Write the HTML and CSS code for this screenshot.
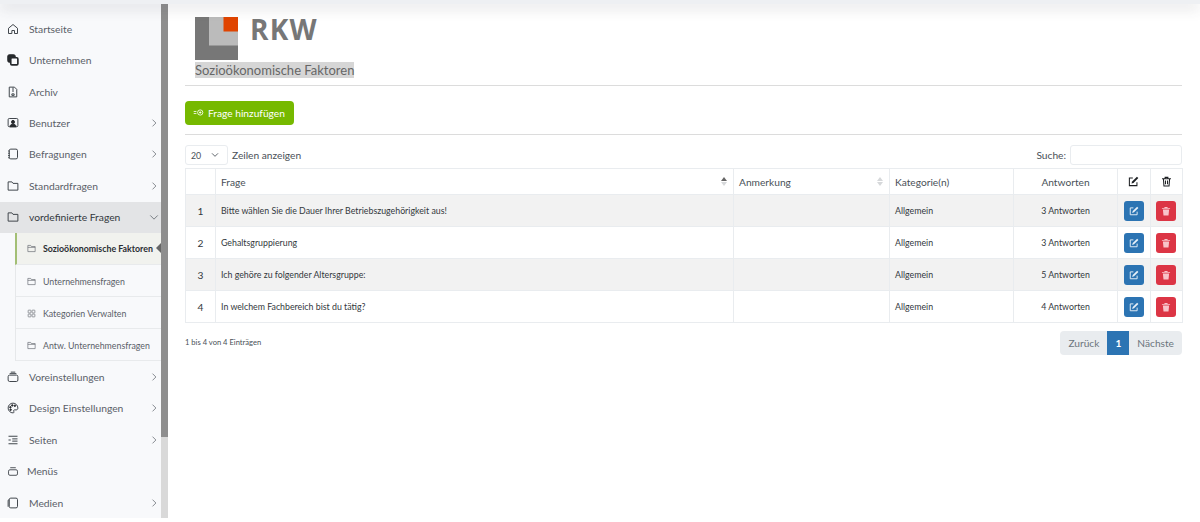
FILE: index.html
```html
<!DOCTYPE html>
<html lang="de">
<head>
<meta charset="utf-8">
<title>Sozioökonomische Faktoren</title>
<link rel="stylesheet" href="styles.css">
</head>
<body>
<div class="topbar"></div>
<div class="layout">
  <aside class="sidebar">
    <nav class="menu">
      <a class="item"><svg class="ico" viewBox="0 0 16 16"><path d="M2 14V7l6-5 6 5v7h-4v-4H6.500v4z"/></svg><span>Startseite</span></a>
      <a class="item"><svg class="ico" viewBox="0 0 16 16"><rect class="solid" x="1" y="1" width="10" height="10" rx="2"/><rect class="thick" x="5" y="5" width="9.500" height="9.500" rx="1.500"/></svg><span>Unternehmen</span></a>
      <a class="item"><svg class="ico" viewBox="0 0 16 16"><path d="M3 1.500h7l3 3v10H3z"/><path d="M8 2v6M6.500 10.500h3v2h-3z"/></svg><span>Archiv</span></a>
      <a class="item"><svg class="ico" viewBox="0 0 16 16"><rect x="1.500" y="2" width="13" height="11" rx="1.500"/><circle class="solid" cx="8" cy="6.500" r="2"/><path class="solid" d="M4 13c0-5 8-5 8 0z"/></svg><span>Benutzer</span><svg class="chev" viewBox="0 0 8 12"><path d="M2 1.500 6.500 6 2 10.500"/></svg></a>
      <a class="item"><svg class="ico" viewBox="0 0 16 16"><rect x="3" y="1.500" width="11" height="13" rx="2"/><path d="M1.500 4h2M1.500 7h2M1.500 10h2M1.500 13h2"/></svg><span>Befragungen</span><svg class="chev" viewBox="0 0 8 12"><path d="M2 1.500 6.500 6 2 10.500"/></svg></a>
      <a class="item"><svg class="ico" viewBox="0 0 16 16"><path d="M1.500 13.500v-11h5l1.500 2h6.500v9z"/></svg><span>Standardfragen</span><svg class="chev" viewBox="0 0 8 12"><path d="M2 1.500 6.500 6 2 10.500"/></svg></a>
      <a class="item open"><svg class="ico" viewBox="0 0 16 16"><path d="M1.500 13.500v-11h5l1.500 2h6.500v9z"/></svg><span>vordefinierte Fragen</span><svg class="chev wide" viewBox="0 0 12 8"><path d="M1.500 1.500 6 6l4.500-4.500"/></svg></a>
      <div class="submenu">
        <a class="subitem active"><svg class="subico" viewBox="0 0 16 16"><path d="M1.500 13.500v-11h5l1.500 2h6.500v9zM1.500 6h13"/></svg><span>Sozioökonomische Faktoren</span></a>
        <a class="subitem"><svg class="subico" viewBox="0 0 16 16"><path d="M1.500 13.500v-11h5l1.500 2h6.500v9zM1.500 6h13"/></svg><span>Unternehmensfragen</span></a>
        <a class="subitem"><svg class="subico" viewBox="0 0 16 16"><rect x="2" y="2" width="5" height="5" rx="1"/><rect x="9" y="2" width="5" height="5" rx="1"/><rect x="2" y="9" width="5" height="5" rx="1"/><rect x="9" y="9" width="5" height="5" rx="1"/></svg><span>Kategorien Verwalten</span></a>
        <a class="subitem"><svg class="subico" viewBox="0 0 16 16"><path d="M1.500 13.500v-11h5l1.500 2h6.500v9zM1.500 6h13"/></svg><span>Antw. Unternehmensfragen</span></a>
      </div>
      <a class="item"><svg class="ico" viewBox="0 0 16 16"><rect x="1.500" y="5.500" width="13" height="8.500" rx="2"/><path d="M3.500 3.500h9M5 1.500h6"/></svg><span>Voreinstellungen</span><svg class="chev" viewBox="0 0 8 12"><path d="M2 1.500 6.500 6 2 10.500"/></svg></a>
      <a class="item"><svg class="ico" viewBox="0 0 16 16"><path d="M8 1.500a6.500 6.500 0 1 0 0 13c1.500 0 1.500-1.200 1-2-.6-1 0-2 1.200-2h2c1.500 0 2.300-1 2.300-2.500 0-3.500-3-6.500-6.500-6.500z"/><circle class="solid" cx="4.500" cy="7" r="1"/><circle class="solid" cx="7" cy="4.500" r="1"/><circle class="solid" cx="10.500" cy="5" r="1"/><circle class="solid" cx="4.800" cy="10.300" r="1"/></svg><span>Design Einstellungen</span><svg class="chev" viewBox="0 0 8 12"><path d="M2 1.500 6.500 6 2 10.500"/></svg></a>
      <a class="item"><svg class="ico" viewBox="0 0 16 16"><path d="M2 3h12M7 6.500h7M7 9.500h7M2 13h12M2 8h3"/></svg><span>Seiten</span><svg class="chev" viewBox="0 0 8 12"><path d="M2 1.500 6.500 6 2 10.500"/></svg></a>
      <a class="item tight"><svg class="ico small" viewBox="0 0 16 16"><rect x="1.500" y="5.500" width="13" height="8" rx="2"/><path d="M4 2.500h8"/></svg><span>Menüs</span></a>
      <a class="item"><svg class="ico" viewBox="0 0 16 16"><rect x="3" y="1.500" width="11" height="13" rx="2"/><path d="M3 3.500c-1 0-1.500.5-1.500 1.500v8"/></svg><span>Medien</span><svg class="chev" viewBox="0 0 8 12"><path d="M2 1.500 6.500 6 2 10.500"/></svg></a>
    </nav>
    <div class="scrollbar"><div class="thumb"></div></div>
  </aside>

  <main class="content">
    <header class="brand">
      <div class="logo">
        <svg class="logo-mark" viewBox="0 0 43 43"><rect width="43" height="43" fill="#777"/><rect x="14" width="29" height="28.500" fill="#bbb"/><rect x="28.500" width="14.500" height="14.500" fill="#e04400"/></svg>
        <span class="logo-text">RKW</span>
      </div>
      <h1 class="title"><span class="selected">Sozioökonomische Faktoren</span></h1>
    </header>
    <hr class="rule">
    <button class="add"><svg class="add-ico" viewBox="0 0 16 10"><path d="M1 3.500h4M1 6.500h4"/><circle cx="10.500" cy="5" r="3.800"/><path d="M8.800 5h3.400M10.500 3.300v3.400"/></svg>Frage hinzufügen</button>
    <hr class="rule second">
    <div class="controls">
      <div class="length"><div class="select"><span>20</span><svg class="select-chev" viewBox="0 0 12 8"><path d="M1.500 1.500 6 6l4.500-4.500"/></svg></div><span>Zeilen anzeigen</span></div>
      <div class="search"><span>Suche:</span><div class="input"></div></div>
    </div>
    <table class="grid">
      <thead>
        <tr>
          <th class="c-num"></th>
          <th class="c-q sortable">Frage<span class="sort"><i class="up dark"></i><i class="down"></i></span></th>
          <th class="c-note sortable">Anmerkung<span class="sort"><i class="up"></i><i class="down"></i></span></th>
          <th class="c-cat">Kategorie(n)</th>
          <th class="c-ans">Antworten</th>
          <th class="c-act"><svg class="head-ico" viewBox="0 0 16 16"><path class="line" d="M13 9v5H2V3h5"/><path class="fill" d="M13 1l2 2-7 7-3 1 1-3z"/></svg></th>
          <th class="c-act"><svg class="head-ico" viewBox="0 0 16 16"><path class="line" d="M1.500 4h13M6 4V2h4v2M3.500 4l.8 10.500h7.400L12.500 4M6.500 6.500v5.500M9.500 6.500v5.500"/></svg></th>
        </tr>
      </thead>
      <tbody>
        <tr class="odd"><td class="num">1</td><td>Bitte wählen Sie die Dauer Ihrer Betriebszugehörigkeit aus!</td><td></td><td>Allgemein</td><td class="center">3 Antworten</td><td class="center"><a class="act edit"><svg viewBox="0 0 16 16"><path class="line" d="M13 9v5H2V3h5"/><path class="fill" d="M13 1l2 2-7 7-3 1 1-3z"/></svg></a></td><td class="center"><a class="act del"><svg viewBox="0 0 16 16"><path class="fill" d="M1.500 3h4V1.500h5V3h4v1.500h-13zM3 5.500h10L12 15H4z"/></svg></a></td></tr>
        <tr><td class="num">2</td><td>Gehaltsgruppierung</td><td></td><td>Allgemein</td><td class="center">3 Antworten</td><td class="center"><a class="act edit"><svg viewBox="0 0 16 16"><path class="line" d="M13 9v5H2V3h5"/><path class="fill" d="M13 1l2 2-7 7-3 1 1-3z"/></svg></a></td><td class="center"><a class="act del"><svg viewBox="0 0 16 16"><path class="fill" d="M1.500 3h4V1.500h5V3h4v1.500h-13zM3 5.500h10L12 15H4z"/></svg></a></td></tr>
        <tr class="odd"><td class="num">3</td><td>Ich gehöre zu folgender Altersgruppe:</td><td></td><td>Allgemein</td><td class="center">5 Antworten</td><td class="center"><a class="act edit"><svg viewBox="0 0 16 16"><path class="line" d="M13 9v5H2V3h5"/><path class="fill" d="M13 1l2 2-7 7-3 1 1-3z"/></svg></a></td><td class="center"><a class="act del"><svg viewBox="0 0 16 16"><path class="fill" d="M1.500 3h4V1.500h5V3h4v1.500h-13zM3 5.500h10L12 15H4z"/></svg></a></td></tr>
        <tr><td class="num">4</td><td>In welchem Fachbereich bist du tätig?</td><td></td><td>Allgemein</td><td class="center">4 Antworten</td><td class="center"><a class="act edit"><svg viewBox="0 0 16 16"><path class="line" d="M13 9v5H2V3h5"/><path class="fill" d="M13 1l2 2-7 7-3 1 1-3z"/></svg></a></td><td class="center"><a class="act del"><svg viewBox="0 0 16 16"><path class="fill" d="M1.500 3h4V1.500h5V3h4v1.500h-13zM3 5.500h10L12 15H4z"/></svg></a></td></tr>
      </tbody>
    </table>
    <div class="footer">
      <div class="info">1 bis 4 von 4 Einträgen</div>
      <div class="pager"><span class="pg">Zurück</span><span class="pg current">1</span><span class="pg">Nächste</span></div>
    </div>
  </main>
</div>
</body>
</html>
```
FILE: styles.css
```css
* { box-sizing: border-box; }
html, body { margin: 0; height: 522px; overflow: hidden; background: #fff; }
body { font-family: "Lato", "Open Sans", sans-serif; color: #495057; }

.topbar { height: 4px; box-shadow: 0 3px 14px rgba(60, 60, 70, .28); background: #eef0f3; position: relative; }

.layout { display: flex; height: 514px; }

.sidebar { width: 168px; flex: none; display: flex; background: #f8f9fb; }
.menu { width: 161px; padding-top: 9px; flex: none; }
.scrollbar { width: 7px; background: #d9d9d9; }
.thumb { height: 433px; background: #8e8e8e; }

.item { display: flex; align-items: center; height: 31.450px; padding: 0 5px 0 7px; font-size: 10.300px; color: #5a6068; }
.item span { margin-left: 10px; flex: 1; white-space: nowrap; }
.item.open { background: #e3e4e6; color: #33383d; }
.item.tight span { margin-left: 8px; }
.ico { width: 12px; height: 12px; flex: none; fill: none; stroke: #3d4248; stroke-width: 1.300; }
.ico.small { height: 11px; }
.ico .solid { fill: #26292c; stroke: #26292c; }
.ico .thick { fill: #f8f9fb; stroke: #26292c; stroke-width: 2.200; }
.chev { width: 6px; height: 10px; flex: none; fill: none; stroke: #70757b; stroke-width: 1.100; margin-right: -1px; }
.chev.wide { width: 10px; height: 7px; margin-right: -3px; }

.submenu { margin-left: 15px; border-left: 1px solid #e6e8ea; }
.subitem { display: flex; align-items: center; height: 32px; padding: 1px 0 0 11px; font-size: 8.800px; color: #5a6068; border-bottom: 1px solid #e8eaec; position: relative; }
.subitem span { margin-left: 7px; white-space: nowrap; }
.subico { width: 9px; height: 9px; flex: none; fill: none; stroke: #5d6268; stroke-width: 1.100; }
.subitem.active { background: #f1f2ee; color: #2a2e33; font-weight: 700; border-left: 2px solid #a3bf75; margin-left: -1px; padding: 0 0 0 10px; }
.subitem.active::after { content: ""; position: absolute; right: 0; top: 10px; border: 5.500px solid transparent; border-right-color: #666; border-left: 0; }

.content { flex: 1; padding: 13px 18px 0 17px; min-width: 0; }

.brand { padding-left: 10px; }
.logo { display: flex; align-items: flex-start; height: 43px; }
.logo-mark { width: 43px; height: 43px; flex: none; }
.logo-text { margin-left: 12px; font-family: "Open Sans", sans-serif; font-weight: 700; font-size: 28px; letter-spacing: 1.200px; color: #777; line-height: 25px; }
.title { margin: 1px 0 0; font-size: 13px; font-weight: 400; line-height: 18px; color: #666; }
.selected { background: #d6d6d6; }

.rule { border: 0; border-top: 1px solid #dcdcdc; margin: 5.500px 0 0; }
.rule.second { margin-top: 9px; }

.add { display: flex; align-items: center; width: 109px; height: 24px; margin-top: 15.500px; padding: 0 0 1px 8px; border: 0; border-radius: 4px; background: #76b900; color: #fff; font: 10.200px "Lato", sans-serif; }
.add-ico { width: 11px; height: 7px; margin-right: 4px; fill: none; stroke: #fff; stroke-width: 1.200; }

.controls { display: flex; justify-content: space-between; align-items: center; margin-top: 10px; height: 20px; font-size: 10.200px; }
.length, .search { display: flex; align-items: center; }
.select { display: flex; align-items: center; justify-content: space-between; width: 43px; height: 20px; margin-right: 4px; padding: 0 8px 0 5px; border: 1px solid #e9ecef; border-radius: 3px; font-size: 8.800px; }
.select-chev { width: 8px; height: 6px; fill: none; stroke: #495057; stroke-width: 1.300; }
.search .input { width: 112px; height: 20px; margin-left: 4px; border: 1px solid #e9ecef; border-radius: 3px; }

.grid { width: 997px; margin-top: 3px; border-collapse: collapse; table-layout: fixed; font-size: 8.800px; color: #33383d; }
.grid th, .grid td { border: 1px solid #e9ecef; padding: 0 5px; height: 32px; }
.grid th { height: 26px; font-size: 10.200px; font-weight: 400; text-align: left; color: #495057; }
.c-num { width: 30px; }
.c-q { width: 518px; }
.c-note { width: 156px; }
.c-cat { width: 124px; }
.c-ans { width: 104px; }
.c-act { width: 32.500px; }
.grid th.c-ans, .grid th.c-act, .center { text-align: center; }
.odd td { background: #f2f2f2; }
.num { text-align: center; font-size: 10.200px; }
.sortable { position: relative; }
.sort { position: absolute; right: 6px; top: 8px; display: flex; flex-direction: column; gap: 1px; }
.sort i { display: block; border: 3.500px solid transparent; border-top: 0; border-bottom: 4.500px solid #d6d8da; }
.sort i.down { border-bottom: 0; border-top: 4.500px solid #d6d8da; }
.sort i.dark { border-bottom-color: #666; }

.head-ico { display: block; width: 11px; height: 11px; margin: 0 auto; }
.line { fill: none; stroke: #1c1f22; stroke-width: 1.500; }
.fill { fill: #1c1f22; }

.act { display: block; width: 20px; height: 20px; margin: 0 auto; padding: 5px; border-radius: 3px; }
.act svg { display: block; width: 10px; height: 10px; }
.edit { background: #2c74b3; }
.edit .line { stroke: #e8f0f8; }
.edit .fill { fill: #e8f0f8; }
.del { background: #dc3545; }
.del .fill { fill: #f8c4ca; }

.footer { display: flex; justify-content: space-between; margin-top: 8px; }
.info { font-size: 7.600px; padding-top: 6px; }
.pager { display: flex; height: 24px; border-radius: 4px; overflow: hidden; background: #e9ecef; font-size: 10.200px; color: #6c757d; }
.pg { display: flex; align-items: center; padding: 0 8px; }
.pg.current { background: #2c74b3; color: #fff; font-weight: 700; }
```
